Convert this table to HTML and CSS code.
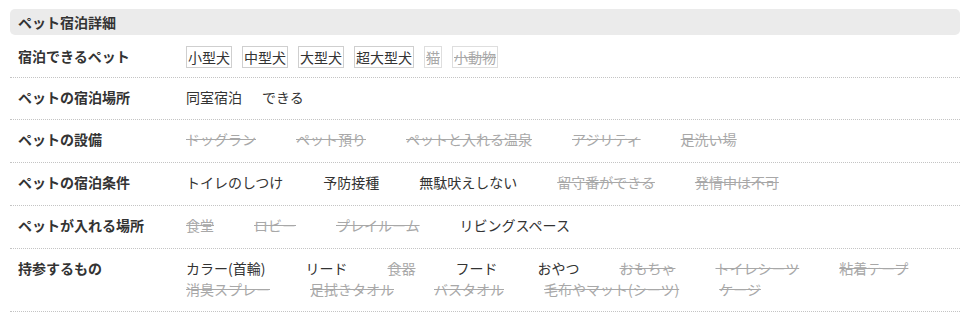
FILE: index.html
```html
<!DOCTYPE html>
<html lang="ja">
<head>
<meta charset="utf-8">
<title>ペット宿泊詳細</title>
<link rel="stylesheet" href="styles.css">
</head>
<body>
<section class="section">
  <h2 class="head">ペット宿泊詳細</h2>
  <dl class="table">
    <div class="row row-first">
      <dt class="label">宿泊できるペット</dt>
      <dd class="boxes">
        <span class="box">小型犬</span>
        <span class="box">中型犬</span>
        <span class="box">大型犬</span>
        <span class="box">超大型犬</span>
        <span class="box off">猫</span>
        <span class="box off">小動物</span>
      </dd>
    </div>
    <div class="row row-short">
      <dt class="label">ペットの宿泊場所</dt>
      <dd class="items items-narrow">
        <span>同室宿泊</span>
        <span>できる</span>
      </dd>
    </div>
    <div class="row">
      <dt class="label">ペットの設備</dt>
      <dd class="items">
        <span class="off">ドッグラン</span>
        <span class="off">ペット預り</span>
        <span class="off">ペットと入れる温泉</span>
        <span class="off">アジリティ</span>
        <span class="off">足洗い場</span>
      </dd>
    </div>
    <div class="row">
      <dt class="label">ペットの宿泊条件</dt>
      <dd class="items">
        <span>トイレのしつけ</span>
        <span>予防接種</span>
        <span>無駄吠えしない</span>
        <span class="off">留守番ができる</span>
        <span class="off">発情中は不可</span>
      </dd>
    </div>
    <div class="row">
      <dt class="label">ペットが入れる場所</dt>
      <dd class="items">
        <span class="off">食堂</span>
        <span class="off">ロビー</span>
        <span class="off">プレイルーム</span>
        <span>リビングスペース</span>
      </dd>
    </div>
    <div class="row row-short">
      <dt class="label">持参するもの</dt>
      <dd class="items">
        <span>カラー(首輪)</span>
        <span>リード</span>
        <span class="off">食器</span>
        <span>フード</span>
        <span>おやつ</span>
        <span class="off">おもちゃ</span>
        <span class="off">トイレシーツ</span>
        <span class="off">粘着テープ</span>
        <span class="off">消臭スプレー</span>
        <span class="off">足拭きタオル</span>
        <span class="off">バスタオル</span>
        <span class="off">毛布やマット(シーツ)</span>
        <span class="off">ケージ</span>
      </dd>
    </div>
  </dl>
</section>
</body>
</html>
```
FILE: styles.css
```css
body {
  margin: 0;
  font-family: "Noto Sans CJK JP", "Noto Sans", sans-serif;
  font-size: 14px;
  color: #333;
  background: #fff;
}

.section {
  margin: 9px 14px 0 10px;
}

.head {
  margin: 0;
  height: 26px;
  line-height: 26px;
  padding-left: 8px;
  background: #ebebeb;
  border-radius: 5px;
  font-size: 14px;
  font-weight: bold;
  color: #333;
}

.table {
  margin: 0;
}

.row {
  display: flex;
  padding: 9px 0 12px;
  border-bottom: 1px dotted #c4c4c4;
  line-height: 21px;
}

.row-short {
  padding-bottom: 11px;
}

.row-first {
  padding: 9px 0 9px;
  align-items: center;
}

.label {
  flex: none;
  width: 168px;
  padding-left: 8px;
  font-weight: bold;
  color: #333;
}

.items,
.boxes {
  flex: 1;
  margin: 0;
  display: flex;
  flex-wrap: wrap;
  column-gap: 40px;
}

.items-narrow {
  column-gap: 20px;
}

.boxes {
  column-gap: 10px;
  padding-top: 2px;
}

.box {
  display: inline-block;
  border: 1px solid #cfcfcf;
  padding: 0 1px;
  line-height: 20px;
}

.box.off {
  border-color: #dedede;
}

.off {
  color: #a8a8a8;
  text-decoration: line-through;
}
```
